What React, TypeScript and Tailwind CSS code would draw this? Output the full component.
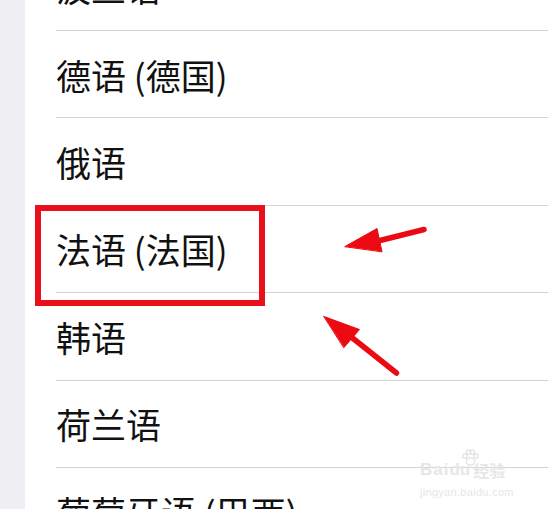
import React from "react"

const languages = ["波兰语", "德语 (德国)", "俄语", "法语 (法国)", "韩语", "荷兰语", "葡萄牙语 (巴西)"]

function Arrows() {
  return (
    <svg className="pointer-events-none absolute left-0 top-0" width="548" height="509" viewBox="0 0 548 509">
      <g fill="#ec0a12" stroke="#ec0a12" strokeLinecap="round" strokeLinejoin="round">
        <line x1="424" y1="229.5" x2="378" y2="241" strokeWidth="5.5" />
        <polygon points="345,246.5 377,228.5 382,251.5" strokeWidth="1" />
        <line x1="396.5" y1="373" x2="350" y2="336" strokeWidth="5.5" />
        <polygon points="324,316.5 359.5,329.5 344,347.5" strokeWidth="1" />
      </g>
    </svg>
  )
}

function Watermark() {
  return (
    <div className="pointer-events-none absolute left-[420px] top-[448px] flex flex-col font-['Liberation_Sans','Noto_Sans_CJK_SC',sans-serif] text-[#e6e6e6]">
      <svg className="absolute left-[41px] top-[1px]" width="19" height="17" viewBox="0 0 19 17">
        <g fill="none" stroke="#e2e2e2" strokeWidth="1.3">
          <circle cx="4" cy="7" r="2.2" />
          <circle cx="7.5" cy="3" r="2.2" />
          <circle cx="11.5" cy="3" r="2.2" />
          <circle cx="15" cy="7" r="2.2" />
          <ellipse cx="9.5" cy="12.5" rx="4.2" ry="3.6" />
        </g>
      </svg>
      <div className="mt-[13px] flex items-end leading-none">
        <span className="text-[17px] font-bold tracking-[1px]">Bai</span>
        <span className="text-[17px] font-bold">du</span>
        <span className="ml-[3px] font-['Noto_Sans_CJK_SC',sans-serif] text-[16px] font-bold">经验</span>
      </div>
      <span className="mt-[9px] text-[11px] leading-none tracking-[0.3px]">jingyan.baidu.com</span>
    </div>
  )
}

export default function App() {
  return (
    <div className="relative h-[509px] w-[548px] overflow-hidden bg-white font-['Noto_Sans_CJK_SC','Noto_Sans',sans-serif]">
      <div className="flex h-full">
        <div className="w-[25px] shrink-0 bg-[#efeff4]" />
        <div className="flex-1 pl-[31px]">
          <div className="-mt-[56.4px] flex flex-col">
            {languages.map((name) => (
              <div
                key={name}
                className="flex h-[87.4px] shrink-0 items-center border-b border-[#d4d4d8] text-[35px] leading-none text-[#111]"
              >
                {name}
              </div>
            ))}
          </div>
        </div>
      </div>
      <div className="pointer-events-none absolute left-[35px] top-[204.5px] h-[101px] w-[230px] border-[6px] border-[#e8101a]" />
      <Arrows />
      <Watermark />
    </div>
  )
}
